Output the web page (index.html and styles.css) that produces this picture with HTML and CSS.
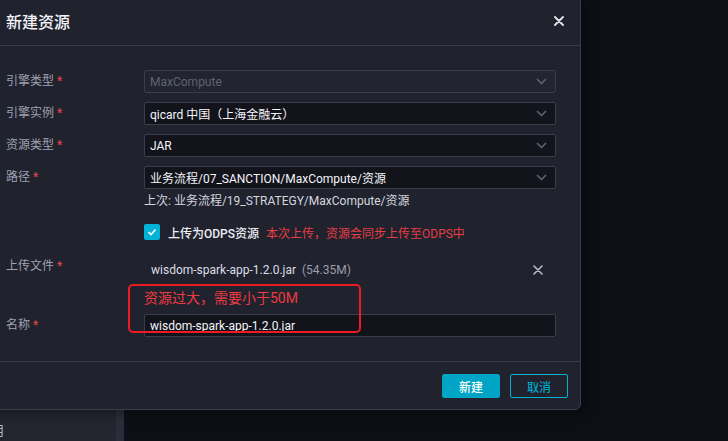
FILE: index.html
```html
<!DOCTYPE html>
<html lang="zh-CN">
<head>
  <meta charset="UTF-8">
  <title>新建资源</title>
  <link rel="stylesheet" href="styles.css">
</head>
<body>

<div class="page">
  <div class="page-top"></div>
  <div class="page-bottom">
    <div class="side-panel"><span class="side-text">启用</span></div>
    <div class="side-bar"></div>
    <div class="main-area"></div>
  </div>
</div>

<div class="modal">
  <div class="modal-header">
    <div class="modal-title">新建资源</div>
    <svg class="close-icon" width="10" height="10" viewBox="0 0 10 10">
      <path d="M1 1L9 9M9 1L1 9" stroke="#e6e7ee" stroke-width="1.8" stroke-linecap="round"/>
    </svg>
  </div>

  <div class="modal-body">
    <div class="form-row">
      <div class="form-label">引擎类型 <span class="req">*</span></div>
      <div class="form-control">
        <div class="select disabled">
          <span>MaxCompute</span>
          <svg class="arrow" width="11" height="7" viewBox="0 0 11 7"><path d="M1 1l4.5 4.5L10 1" fill="none" stroke="#5d6072" stroke-width="1.6"/></svg>
        </div>
      </div>
    </div>

    <div class="form-row">
      <div class="form-label">引擎实例 <span class="req">*</span></div>
      <div class="form-control">
        <div class="select">
          <span>qicard 中国（上海金融云）</span>
          <svg class="arrow" width="11" height="7" viewBox="0 0 11 7"><path d="M1 1l4.5 4.5L10 1" fill="none" stroke="#5d6072" stroke-width="1.6"/></svg>
        </div>
      </div>
    </div>

    <div class="form-row">
      <div class="form-label">资源类型 <span class="req">*</span></div>
      <div class="form-control">
        <div class="select">
          <span>JAR</span>
          <svg class="arrow" width="11" height="7" viewBox="0 0 11 7"><path d="M1 1l4.5 4.5L10 1" fill="none" stroke="#5d6072" stroke-width="1.6"/></svg>
        </div>
      </div>
    </div>

    <div class="form-row path-row">
      <div class="form-label">路径 <span class="req">*</span></div>
      <div class="form-control">
        <div class="select">
          <span>业务流程/07_SANCTION/MaxCompute/资源</span>
          <svg class="arrow" width="11" height="7" viewBox="0 0 11 7"><path d="M1 1l4.5 4.5L10 1" fill="none" stroke="#5d6072" stroke-width="1.6"/></svg>
        </div>
        <div class="hint">上次: 业务流程/19_STRATEGY/MaxCompute/资源</div>
        <div class="check-line">
          <span class="checkbox">
            <svg width="10" height="8" viewBox="0 0 10 8"><path d="M1.5 4l2.5 2.5L8.5 1.5" fill="none" stroke="#fff" stroke-width="1.6"/></svg>
          </span>
          <span class="check-text">上传为ODPS资源</span>
          <span class="check-warn">本次上传，资源会同步上传至ODPS中</span>
        </div>
      </div>
    </div>

    <div class="form-row upload-row">
      <div class="form-label">上传文件 <span class="req">*</span></div>
      <div class="form-control">
        <div class="file-line">
          <span class="file-name">wisdom-spark-app-1.2.0.jar</span>
          <span class="file-size">(54.35M)</span>
          <svg class="file-remove" width="10" height="10" viewBox="0 0 10 10">
            <path d="M1 1L9 9M9 1L1 9" stroke="#b9bbca" stroke-width="1.6" stroke-linecap="round"/>
          </svg>
        </div>
        <div class="error">资源过大，需要小于50M</div>
      </div>
    </div>

    <div class="form-row last">
      <div class="form-label">名称 <span class="req">*</span></div>
      <div class="form-control">
        <div class="input">wisdom-spark-app-1.2.0.jar</div>
      </div>
    </div>
  </div>

  <div class="modal-footer">
    <button class="btn btn-primary">新建</button>
    <button class="btn btn-ghost">取消</button>
  </div>

  <div class="mark-box"></div>
</div>

</body>
</html>
```

FILE: styles.css
```css
* {
  box-sizing: border-box;
}

body {
  margin: 0;
  width: 728px;
  height: 441px;
  overflow: hidden;
  background: #0e0f16;
  font-family: "Roboto", "Noto Sans CJK SC", sans-serif;
  font-size: 12px;
  color: #e4e5ec;
  position: relative;
}

/* page behind the modal */
.page {
  display: flex;
  flex-direction: column;
  height: 100%;
}

.page-top {
  height: 410px;
}

.page-bottom {
  flex: 1;
  display: flex;
}

.side-panel {
  width: 116px;
  background: #23252f;
  overflow: hidden;
  white-space: nowrap;
  padding-top: 10px;
}

.side-text {
  display: inline-block;
  margin-left: -22px;
  color: #b5b7c4;
  font-size: 13px;
}

.side-bar {
  width: 8px;
  background: #2b2d3a;
}

.main-area {
  flex: 1;
  background: #0e0f16;
}

/* modal */
.modal {
  position: absolute;
  left: -20px;
  top: -5px;
  width: 601px;
  background: #20222e;
  border: 1px solid #3a3c4c;
  border-radius: 6px;
  box-shadow: 4px 4px 12px rgba(0, 0, 0, 0.35);
}

.modal-header {
  height: 50px;
  display: flex;
  align-items: center;
  justify-content: space-between;
  padding: 0 16px 0 25px;
  border-bottom: 1px solid #3a3c4c;
}

.modal-title {
  font-size: 16px;
  font-weight: 500;
  color: #f2f3f7;
}

.modal-body {
  padding: 24px 24px 24px 25px;
  border-bottom: 1px solid #3a3c4c;
}

.form-row {
  display: flex;
  margin-bottom: 9px;
}

.form-row.last {
  margin-bottom: 0;
}

.form-label {
  width: 138px;
  flex-shrink: 0;
  height: 23px;
  line-height: 23px;
  color: #9fa1b1;
}

.req {
  color: #e8474c;
}

.form-control {
  flex: 1;
}

.select,
.input {
  height: 23px;
  border: 1px solid #3b3d4d;
  border-radius: 2px;
  background: #12131b;
  display: flex;
  align-items: center;
  justify-content: space-between;
  padding: 0 8px 0 5px;
  color: #f4f5f8;
}

.select.disabled {
  background: #22242f;
  color: #5f6274;
}

.arrow {
  flex-shrink: 0;
}

.hint {
  margin-top: 3px;
  line-height: 19px;
  color: #d4d6df;
}

.check-line {
  display: flex;
  align-items: center;
  height: 20px;
  margin-top: 11px;
}

.checkbox {
  width: 16px;
  height: 16px;
  border-radius: 2px;
  background: #00b3d7;
  display: flex;
  align-items: center;
  justify-content: center;
  margin-right: 8px;
}

.check-text {
  color: #eceef3;
  font-weight: 500;
  margin-right: 7px;
}

.check-warn {
  color: #e53e44;
}

.path-row {
  margin-bottom: 14px;
}

.upload-row {
  margin-bottom: 6px;
}

.upload-row .form-label {
  margin-top: -1px;
}

.file-line {
  display: flex;
  align-items: center;
  height: 20px;
  margin-top: 4px;
  padding-left: 7px;
  padding-right: 13px;
}

.file-name {
  color: #dcdee6;
}

.file-size {
  color: #9a9cab;
  margin-left: 6px;
  flex: 1;
}

.error {
  margin-top: 8px;
  line-height: 20px;
  color: #ee3a40;
  font-size: 14px;
}

.modal-footer {
  display: flex;
  justify-content: flex-end;
  gap: 10px;
  padding: 12px 12px 11px 0;
}

.btn {
  width: 58px;
  height: 24px;
  border-radius: 2px;
  font-family: "Noto Sans CJK SC", sans-serif;
  font-size: 12px;
  font-weight: 500;
  cursor: pointer;
}

.btn-primary {
  background: #00a4c5;
  border: 1px solid #00a4c5;
  color: #ffffff;
}

.btn-ghost {
  background: transparent;
  border: 1px solid #00b2d0;
  color: #00a6c6;
}

/* annotation drawn over the screenshot */
.mark-box {
  position: absolute;
  left: 147px;
  top: 288px;
  width: 233px;
  height: 49px;
  border: 2px solid #ee1a24;
  border-radius: 5px;
}
```
